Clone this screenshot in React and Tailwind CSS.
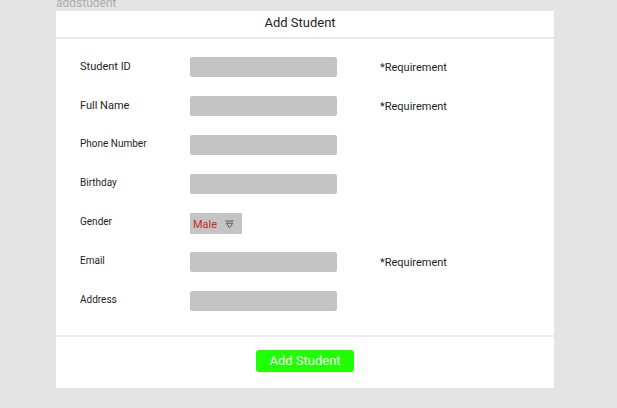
export default function App() {
  const rows = [
    { label: "Student ID", size: "text-[11px] leading-[20px]", req: true },
    { label: "Full Name", size: "text-[11px] leading-[19px]", req: true },
    { label: "Phone Number", size: "text-[10px] leading-[18px]" },
    { label: "Birthday", size: "text-[10px] leading-[18px]" },
    { label: "Gender", size: "text-[10px] leading-[18px]", gender: true },
    { label: "Email", size: "text-[10px] leading-[18px]", req: true },
    { label: "Address", size: "text-[10px] leading-[18px]" },
  ];
  return (
    <div
      className="w-[617px] h-[408px] bg-[#e4e4e4] overflow-hidden"
      style={{ fontFamily: "Roboto, 'Noto Sans', sans-serif" }}
    >
      <div className="ml-[56px] -mt-[4px] h-[15px] text-[12px] leading-[15px] text-[#adadad]">
        addstudent
      </div>
      <div className="ml-[56px] w-[498px] flex flex-col">
        <div className="h-[26px] bg-white border-b-2 border-[#ebebeb] box-content flex justify-center pr-[10px] text-[13px] leading-[24px] text-[#1e1e1e]">
          Add Student
        </div>
        <div className="bg-white border-b-2 border-[#ebebeb] pt-[18px] pb-[24px] pl-[24px] flex flex-col gap-[19px]">
          {rows.map((r) => (
            <div key={r.label} className="flex items-start h-[20px]">
              <div className={`w-[110px] text-[#1e1e1e] ${r.size}`}>{r.label}</div>
              {r.gender ? (
                <div className="w-[52px] h-[21px] bg-[#c4c4c4] flex items-center pl-[3px] pr-[8px] justify-between">
                  <span className="text-[11px] leading-[21px] mt-[2px] text-[#c62828]">Male</span>
                  <svg width="9" height="9" viewBox="0 0 9 9" className="mt-[1px]">
                    <line x1="0.5" y1="1" x2="8.5" y2="1" stroke="#555" strokeWidth="1" />
                    <path d="M1.2 3.2 L7.8 3.2 L4.5 7.8 Z" fill="none" stroke="#555" strokeWidth="1" strokeLinejoin="round" />
                  </svg>
                </div>
              ) : (
                <div className="w-[147px] h-[20px] bg-[#c4c4c4] rounded-[2px]" />
              )}
              {r.req && (
                <div className="ml-[43px] text-[11px] leading-[21px] text-[#1e1e1e]">*Requirement</div>
              )}
            </div>
          ))}
        </div>
        <div className="h-[51px] bg-white flex justify-center pt-[13px]">
          <button className="w-[98px] h-[22px] rounded-[3px] bg-[#1eff00] text-white text-[13px] leading-[22px]">
            Add Student
          </button>
        </div>
      </div>
    </div>
  );
}
